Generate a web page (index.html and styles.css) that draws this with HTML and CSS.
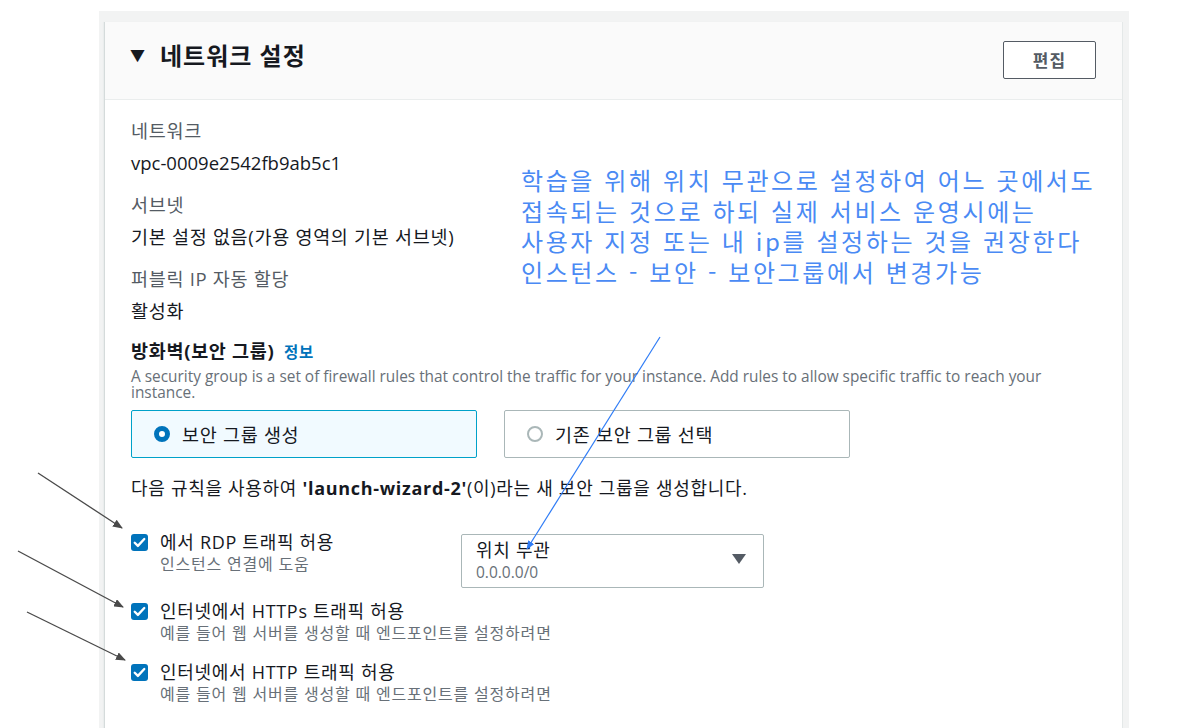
FILE: index.html
```html
<!DOCTYPE html>
<html lang="ko">
<head>
  <meta charset="utf-8" />
  <title>네트워크 설정</title>
  <link rel="stylesheet" href="styles.css">
</head>

<body>
  <div class="frame">
    <div class="card">
      <div class="card-header">
        <h2 class="card-title"><span class="caret">▼</span>네트워크 설정</h2>
        <button class="edit-btn">편집</button>
      </div>

      <div class="card-body">
        <!-- 네트워크 정보 -->
        <div class="kv">
          <div class="kv-label">네트워크</div>
          <div class="kv-value latin">vpc-0009e2542fb9ab5c1</div>
        </div>
        <div class="kv">
          <div class="kv-label">서브넷</div>
          <div class="kv-value">기본 설정 없음(가용 영역의 기본 서브넷)</div>
        </div>
        <div class="kv">
          <div class="kv-label">퍼블릭 IP 자동 할당</div>
          <div class="kv-value">활성화</div>
        </div>

        <!-- 방화벽 -->
        <div class="fw-title">방화벽(보안 그룹) <a class="info-link">정보</a></div>
        <p class="fw-desc">A security group is a set of firewall rules that control the traffic for your instance. Add rules to allow specific traffic to reach your instance.</p>

        <div class="tiles">
          <div class="tile selected">
            <span class="radio on"></span>보안 그룹 생성
          </div>
          <div class="tile">
            <span class="radio"></span>기존 보안 그룹 선택
          </div>
        </div>

        <p class="rule-intro">다음 규칙을 사용하여 <b>'launch-wizard-2'</b>(이)라는 새 보안 그룹을 생성합니다.</p>

        <div class="rules">
          <div class="rule">
            <div class="rule-check">
              <span class="checkbox"><svg viewBox="0 0 16 16"><path d="M3.5 8.2l3 3 6-6.5" /></svg></span>
              <div>
                <div class="rule-label">에서 RDP 트래픽 허용</div>
                <div class="rule-desc">인스턴스 연결에 도움</div>
              </div>
            </div>
            <div class="select">
              <div>
                <div class="select-value">위치 무관</div>
                <div class="select-sub">0.0.0.0/0</div>
              </div>
              <span class="select-caret"></span>
            </div>
          </div>

          <div class="rule">
            <div class="rule-check">
              <span class="checkbox"><svg viewBox="0 0 16 16"><path d="M3.5 8.2l3 3 6-6.5" /></svg></span>
              <div>
                <div class="rule-label">인터넷에서 HTTPs 트래픽 허용</div>
                <div class="rule-desc">예를 들어 웹 서버를 생성할 때 엔드포인트를 설정하려면</div>
              </div>
            </div>
          </div>

          <div class="rule">
            <div class="rule-check">
              <span class="checkbox"><svg viewBox="0 0 16 16"><path d="M3.5 8.2l3 3 6-6.5" /></svg></span>
              <div>
                <div class="rule-label">인터넷에서 HTTP 트래픽 허용</div>
                <div class="rule-desc">예를 들어 웹 서버를 생성할 때 엔드포인트를 설정하려면</div>
              </div>
            </div>
          </div>
        </div>
      </div>
    </div>
  </div>

  <!-- 메모 -->
  <div class="note">
    <div>학습을 위해 위치 무관으로 설정하여 어느 곳에서도</div>
    <div>접속되는 것으로 하되 실제 서비스 운영시에는</div>
    <div>사용자 지정 또는 내 ip를 설정하는 것을 권장한다</div>
    <div>인스턴스 - 보안 - 보안그룹에서 변경가능</div>
  </div>

  <svg class="marks" width="1179" height="728" viewBox="0 0 1179 728">
    <defs>
      <marker id="headGray" markerWidth="10" markerHeight="8" refX="9" refY="4" orient="auto" markerUnits="userSpaceOnUse">
        <path d="M0 0L10 4L0 8z" fill="#4a4a4a" />
      </marker>
      <marker id="headBlue" markerWidth="9" markerHeight="7" refX="8" refY="3.5" orient="auto" markerUnits="userSpaceOnUse">
        <path d="M0 0L9 3.5L0 7z" fill="#2f7cf6" />
      </marker>
    </defs>
    <line x1="38" y1="473" x2="122" y2="528" stroke="#4a4a4a" stroke-width="1.3" marker-end="url(#headGray)" />
    <line x1="18" y1="551" x2="123" y2="607" stroke="#4a4a4a" stroke-width="1.3" marker-end="url(#headGray)" />
    <line x1="27" y1="612" x2="125" y2="660" stroke="#4a4a4a" stroke-width="1.3" marker-end="url(#headGray)" />
    <line x1="660" y1="337" x2="527" y2="549" stroke="#2f7cf6" stroke-width="1.2" marker-end="url(#headBlue)" />
  </svg>
</body>
</html>
```

FILE: styles.css
```css
body {
  margin: 0;
  background: #ffffff;
  font-family: "Open Sans", "Noto Sans CJK KR", sans-serif;
  color: #16191f;
  height: 728px;
  overflow: hidden;
  position: relative;
}

.frame {
  margin-left: 99px;
  margin-top: 11px;
  width: 1030px;
  height: 717px;
  background: #f2f3f3;
  padding: 11px 6px 0 5px;
  box-sizing: border-box;
}

.card {
  height: 100%;
  background: #ffffff;
  border-left: 1px solid #d5dbdb;
  border-right: 1px solid #e4e8e8;
  box-shadow: -1px 0 1px #eaeded;
}

.card-header {
  height: 77px;
  background: #fafafa;
  border-bottom: 1px solid #eaeded;
  display: flex;
  justify-content: space-between;
  align-items: center;
  padding: 0 26px 0 25px;
}

.card-title {
  margin: -13px 0 0;
  font-size: 24px;
  letter-spacing: 1px;
  font-weight: bold;
  display: flex;
  align-items: center;
}

.caret {
  font-size: 15px;
  margin-right: 14px;
}

.edit-btn {
  width: 93px;
  height: 38px;
  background: #ffffff;
  border: 1px solid #545b64;
  border-radius: 2px;
  font-family: inherit;
  font-size: 17px;
  letter-spacing: 1px;
  font-weight: bold;
  color: #545b64;
  margin-top: -2px;
  cursor: pointer;
}

.card-body {
  padding: 15px 27px 0 26px;
  letter-spacing: 0.7px;
}

.kv {
  margin-bottom: 10px;
}

.kv-label {
  line-height: 32px;
  font-size: 18.5px;
  color: #545b64;
}

.kv-value {
  line-height: 32px;
  font-size: 18.5px;
}

.latin {
  letter-spacing: 0;
}

.fw-title {
  line-height: 28px;
  font-size: 18.5px;
  font-weight: bold;
}

.info-link {
  color: #0073bb;
  font-size: 15.5px;
  margin-left: 4px;
}

.fw-desc {
  margin: 3px 0 0;
  max-width: 940px;
  font-size: 15.4px;
  letter-spacing: 0;
  line-height: 16px;
  color: #687078;
}

.tiles {
  display: flex;
  gap: 27px;
  margin-top: 9px;
}

.tile {
  width: 346px;
  height: 48px;
  box-sizing: border-box;
  border: 1px solid #aab7b8;
  border-radius: 2px;
  display: flex;
  align-items: center;
  padding-left: 22px;
  font-size: 18.5px;
  color: #16191f;
}

.tile.selected {
  background: #f1faff;
  border-color: #00a1c9;
}

.radio {
  width: 16px;
  height: 16px;
  box-sizing: border-box;
  border: 2px solid #aab7b8;
  border-radius: 50%;
  margin-right: 12px;
  background: #ffffff;
}

.radio.on {
  border: 5px solid #0073bb;
}

.rule-intro {
  margin: 18px 0 0;
  line-height: 24px;
  font-size: 18px;
}

.rules {
  margin-top: 31px;
  display: flex;
  flex-direction: column;
  gap: 12px;
}

.rule {
  display: flex;
  align-items: flex-start;
}

.rule-check {
  min-width: 330px;
  display: flex;
  align-items: flex-start;
}

.checkbox {
  width: 17px;
  height: 17px;
  background: #0073bb;
  border-radius: 3px;
  margin-top: 3px;
  margin-right: 12px;
  flex-shrink: 0;
  display: flex;
}

.checkbox svg {
  width: 17px;
  height: 17px;
  fill: none;
  stroke: #ffffff;
  stroke-width: 2.2;
  stroke-linecap: round;
  stroke-linejoin: round;
}

.rule-label {
  line-height: 22px;
  font-size: 18px;
}

.rule-desc {
  line-height: 22px;
  font-size: 16px;
  letter-spacing: 0.8px;
  color: #687078;
  padding-bottom: 5px;
}

.select {
  width: 303px;
  height: 54px;
  box-sizing: border-box;
  border: 1px solid #aab7b8;
  border-radius: 2px;
  margin-top: 3px;
  display: flex;
  justify-content: space-between;
  align-items: center;
  padding: 0 17px 0 14px;
}

.select-value {
  font-size: 18px;
  line-height: 22px;
}

.select-sub {
  font-size: 15.5px;
  letter-spacing: 0;
  line-height: 22px;
  color: #687078;
}

.select-caret {
  width: 0;
  height: 0;
  border-left: 7px solid transparent;
  border-right: 7px solid transparent;
  border-top: 10px solid #545b64;
  margin-top: -4px;
}

.note {
  position: absolute;
  left: 521px;
  top: 165px;
  font-family: "Noto Sans CJK KR", sans-serif;
  font-size: 24px;
  letter-spacing: 2.6px;
  color: #4a8af4;
}

.note div {
  height: 30.5px;
  line-height: 30.5px;
}

.marks {
  position: absolute;
  left: 0;
  top: 0;
  pointer-events: none;
}
```
